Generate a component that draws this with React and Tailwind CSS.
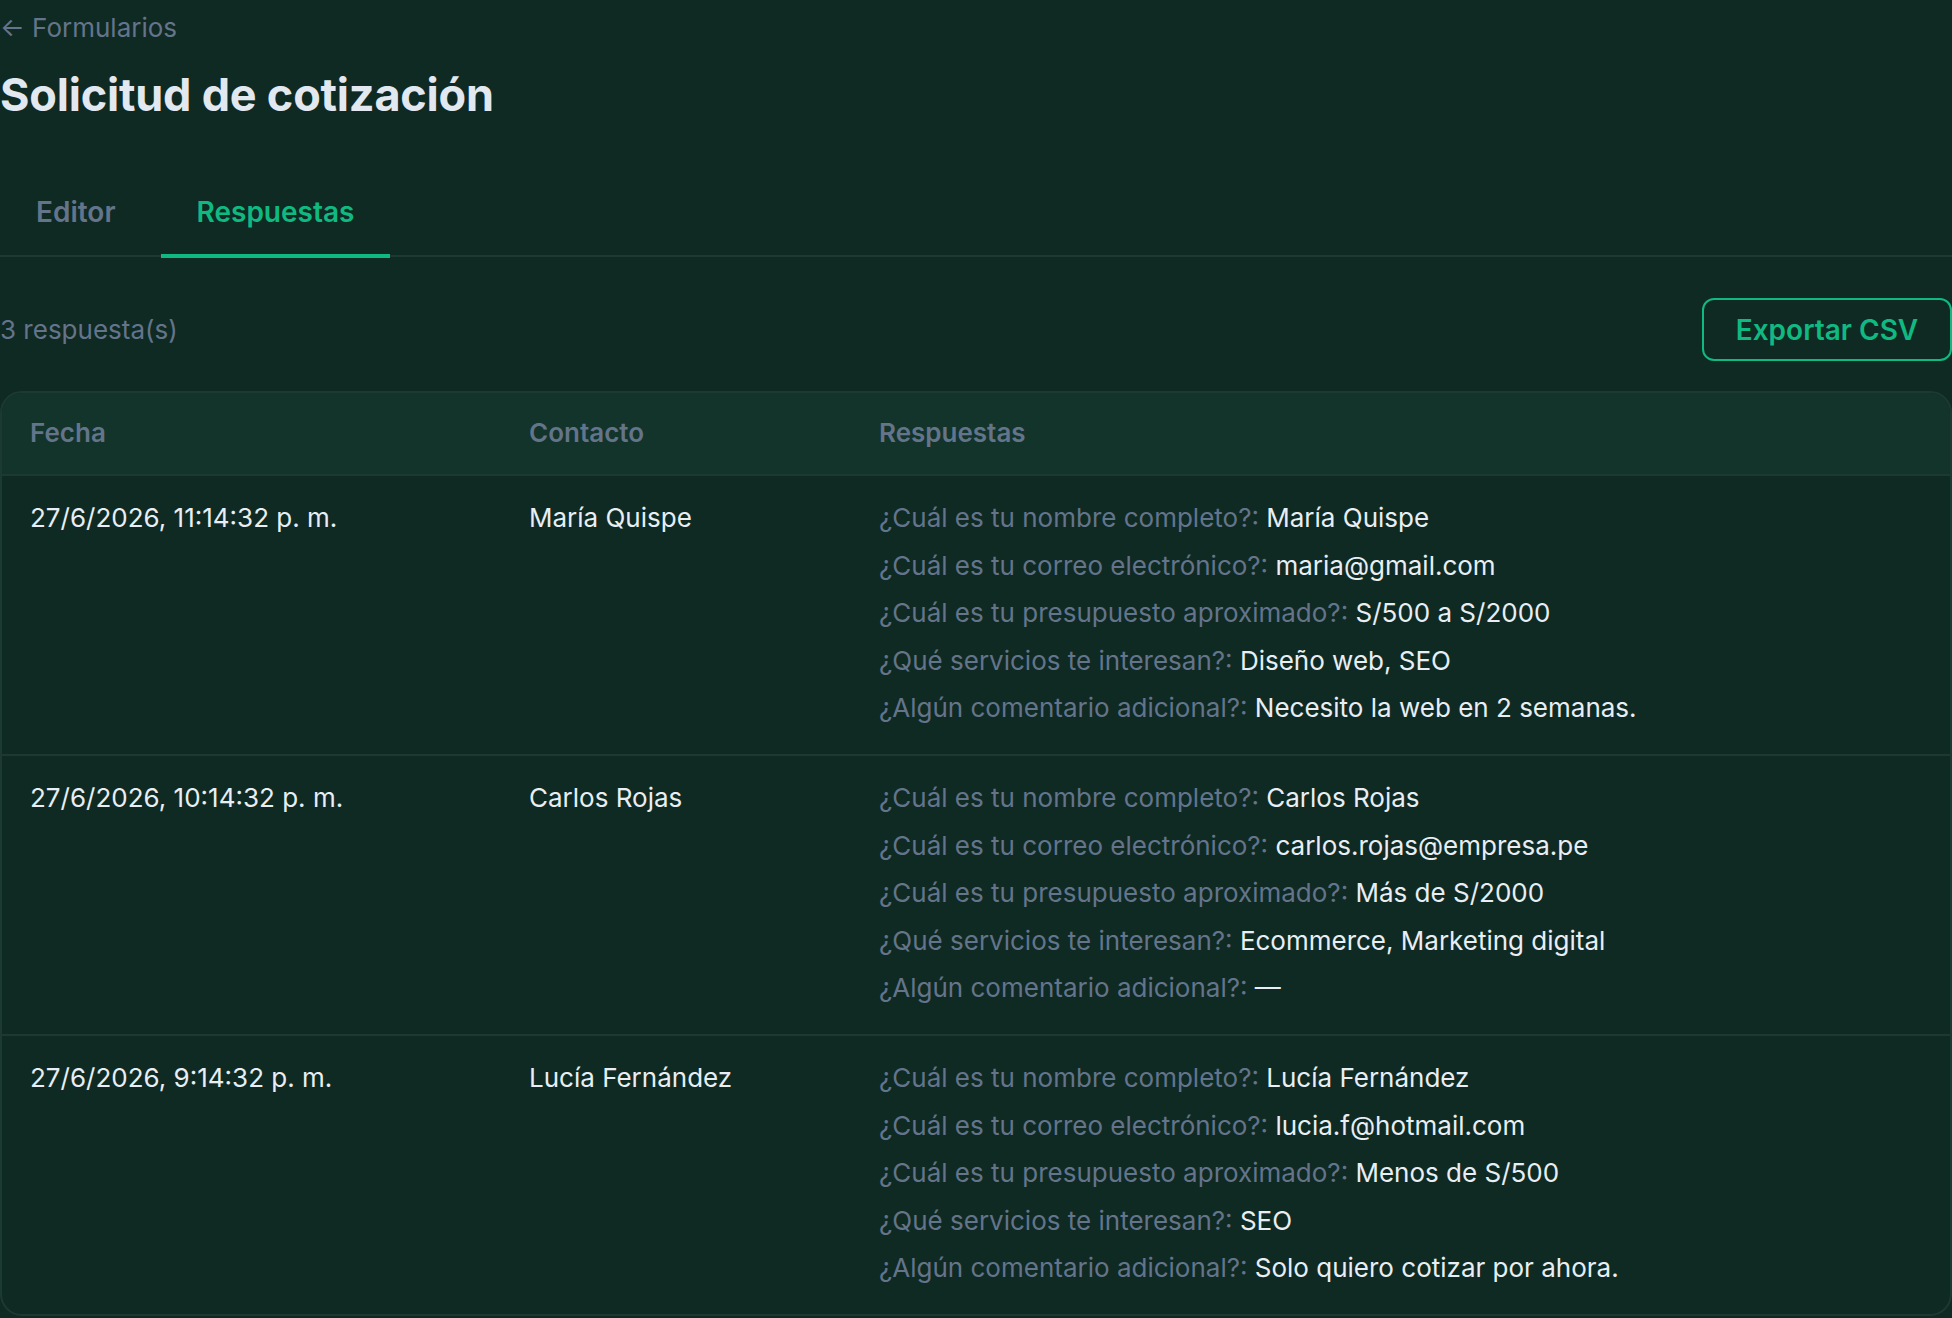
import React from "react";

const rows = [
  {
    fecha: "27/6/2026, 11:14:32 p. m.",
    contacto: "María Quispe",
    answers: [
      ["¿Cuál es tu nombre completo?:", "María Quispe"],
      ["¿Cuál es tu correo electrónico?:", "maria@gmail.com"],
      ["¿Cuál es tu presupuesto aproximado?:", "S/500 a S/2000"],
      ["¿Qué servicios te interesan?:", "Diseño web, SEO"],
      ["¿Algún comentario adicional?:", "Necesito la web en 2 semanas."],
    ],
  },
  {
    fecha: "27/6/2026, 10:14:32 p. m.",
    contacto: "Carlos Rojas",
    answers: [
      ["¿Cuál es tu nombre completo?:", "Carlos Rojas"],
      ["¿Cuál es tu correo electrónico?:", "carlos.rojas@empresa.pe"],
      ["¿Cuál es tu presupuesto aproximado?:", "Más de S/2000"],
      ["¿Qué servicios te interesan?:", "Ecommerce, Marketing digital"],
      ["¿Algún comentario adicional?:", "—"],
    ],
  },
  {
    fecha: "27/6/2026, 9:14:32 p. m.",
    contacto: "Lucía Fernández",
    answers: [
      ["¿Cuál es tu nombre completo?:", "Lucía Fernández"],
      ["¿Cuál es tu correo electrónico?:", "lucia.f@hotmail.com"],
      ["¿Cuál es tu presupuesto aproximado?:", "Menos de S/500"],
      ["¿Qué servicios te interesan?:", "SEO"],
      ["¿Algún comentario adicional?:", "Solo quiero cotizar por ahora."],
    ],
  },
];

export default function App() {
  return (
    <div
      className="min-h-screen w-full bg-[#0f2a23] text-[#e8eef4]"
      style={{ fontFamily: "Inter, 'Noto Sans', sans-serif" }}
    >
      <div className="flex flex-col">
        <div className="pt-[7.5px] text-[26px] leading-[39px] text-[#64748b]">
          ← Formularios
        </div>
        <h1 className="mt-[21.5px] text-[45px] leading-[54px] font-bold text-[#e2e8f0] tracking-[-0.2px]">
          Solicitud de cotización
        </h1>

        <div className="mt-[48px] flex items-start gap-[9px] border-b-2 border-[#1d3a32]">
          <div className="px-[36px] pt-[21px] pb-[21px] text-[28px] leading-[42px] font-semibold text-[#64748b]">
            Editor
          </div>
          <div className="-mb-[3px] border-b-4 border-[#10b981] px-[36px] pt-[21px] pb-[21px] text-[28px] leading-[42px] font-semibold text-[#10b981]">
            Respuestas
          </div>
        </div>

        <div className="mt-[41px] flex items-center justify-between">
          <div className="text-[26px] leading-[39px] text-[#64748b]">3 respuesta(s)</div>
          <button className="h-[63px] w-[250px] rounded-[12px] border-2 border-[#10b981] text-[28px] font-semibold text-[#10b981]">
            Exportar CSV
          </button>
        </div>

        <div className="mt-[30px] overflow-hidden rounded-[22px] border-2 border-[#1d3a32]">
          <div className="grid grid-cols-[499px_350px_1fr] border-b-2 border-[#1d3a32] bg-[#12342b] text-[26px] leading-[39px] font-semibold text-[#64748b]">
            <div className="px-[28px] pt-[20px] pb-[22px]">Fecha</div>
            <div className="px-[28px] pt-[20px] pb-[22px]">Contacto</div>
            <div className="px-[28px] pt-[20px] pb-[22px]">Respuestas</div>
          </div>
          {rows.map((r, i) => (
            <div
              key={i}
              className={
                "grid grid-cols-[499px_350px_1fr] text-[26px] leading-[39px] " +
                (i < rows.length - 1 ? "border-b-2 border-[#1d3a32]" : "")
              }
            >
              <div className="px-[28px] pt-[22px] pb-[27px]">{r.fecha}</div>
              <div className="px-[28px] pt-[22px] pb-[27px]">{r.contacto}</div>
              <div className="flex flex-col gap-[8.5px] px-[28px] pt-[22px] pb-[27px]">
                {r.answers.map(([q, a], j) => (
                  <div key={j}>
                    <span className="text-[#64748b]">{q}</span> <span>{a}</span>
                  </div>
                ))}
              </div>
            </div>
          ))}
        </div>
      </div>
    </div>
  );
}
